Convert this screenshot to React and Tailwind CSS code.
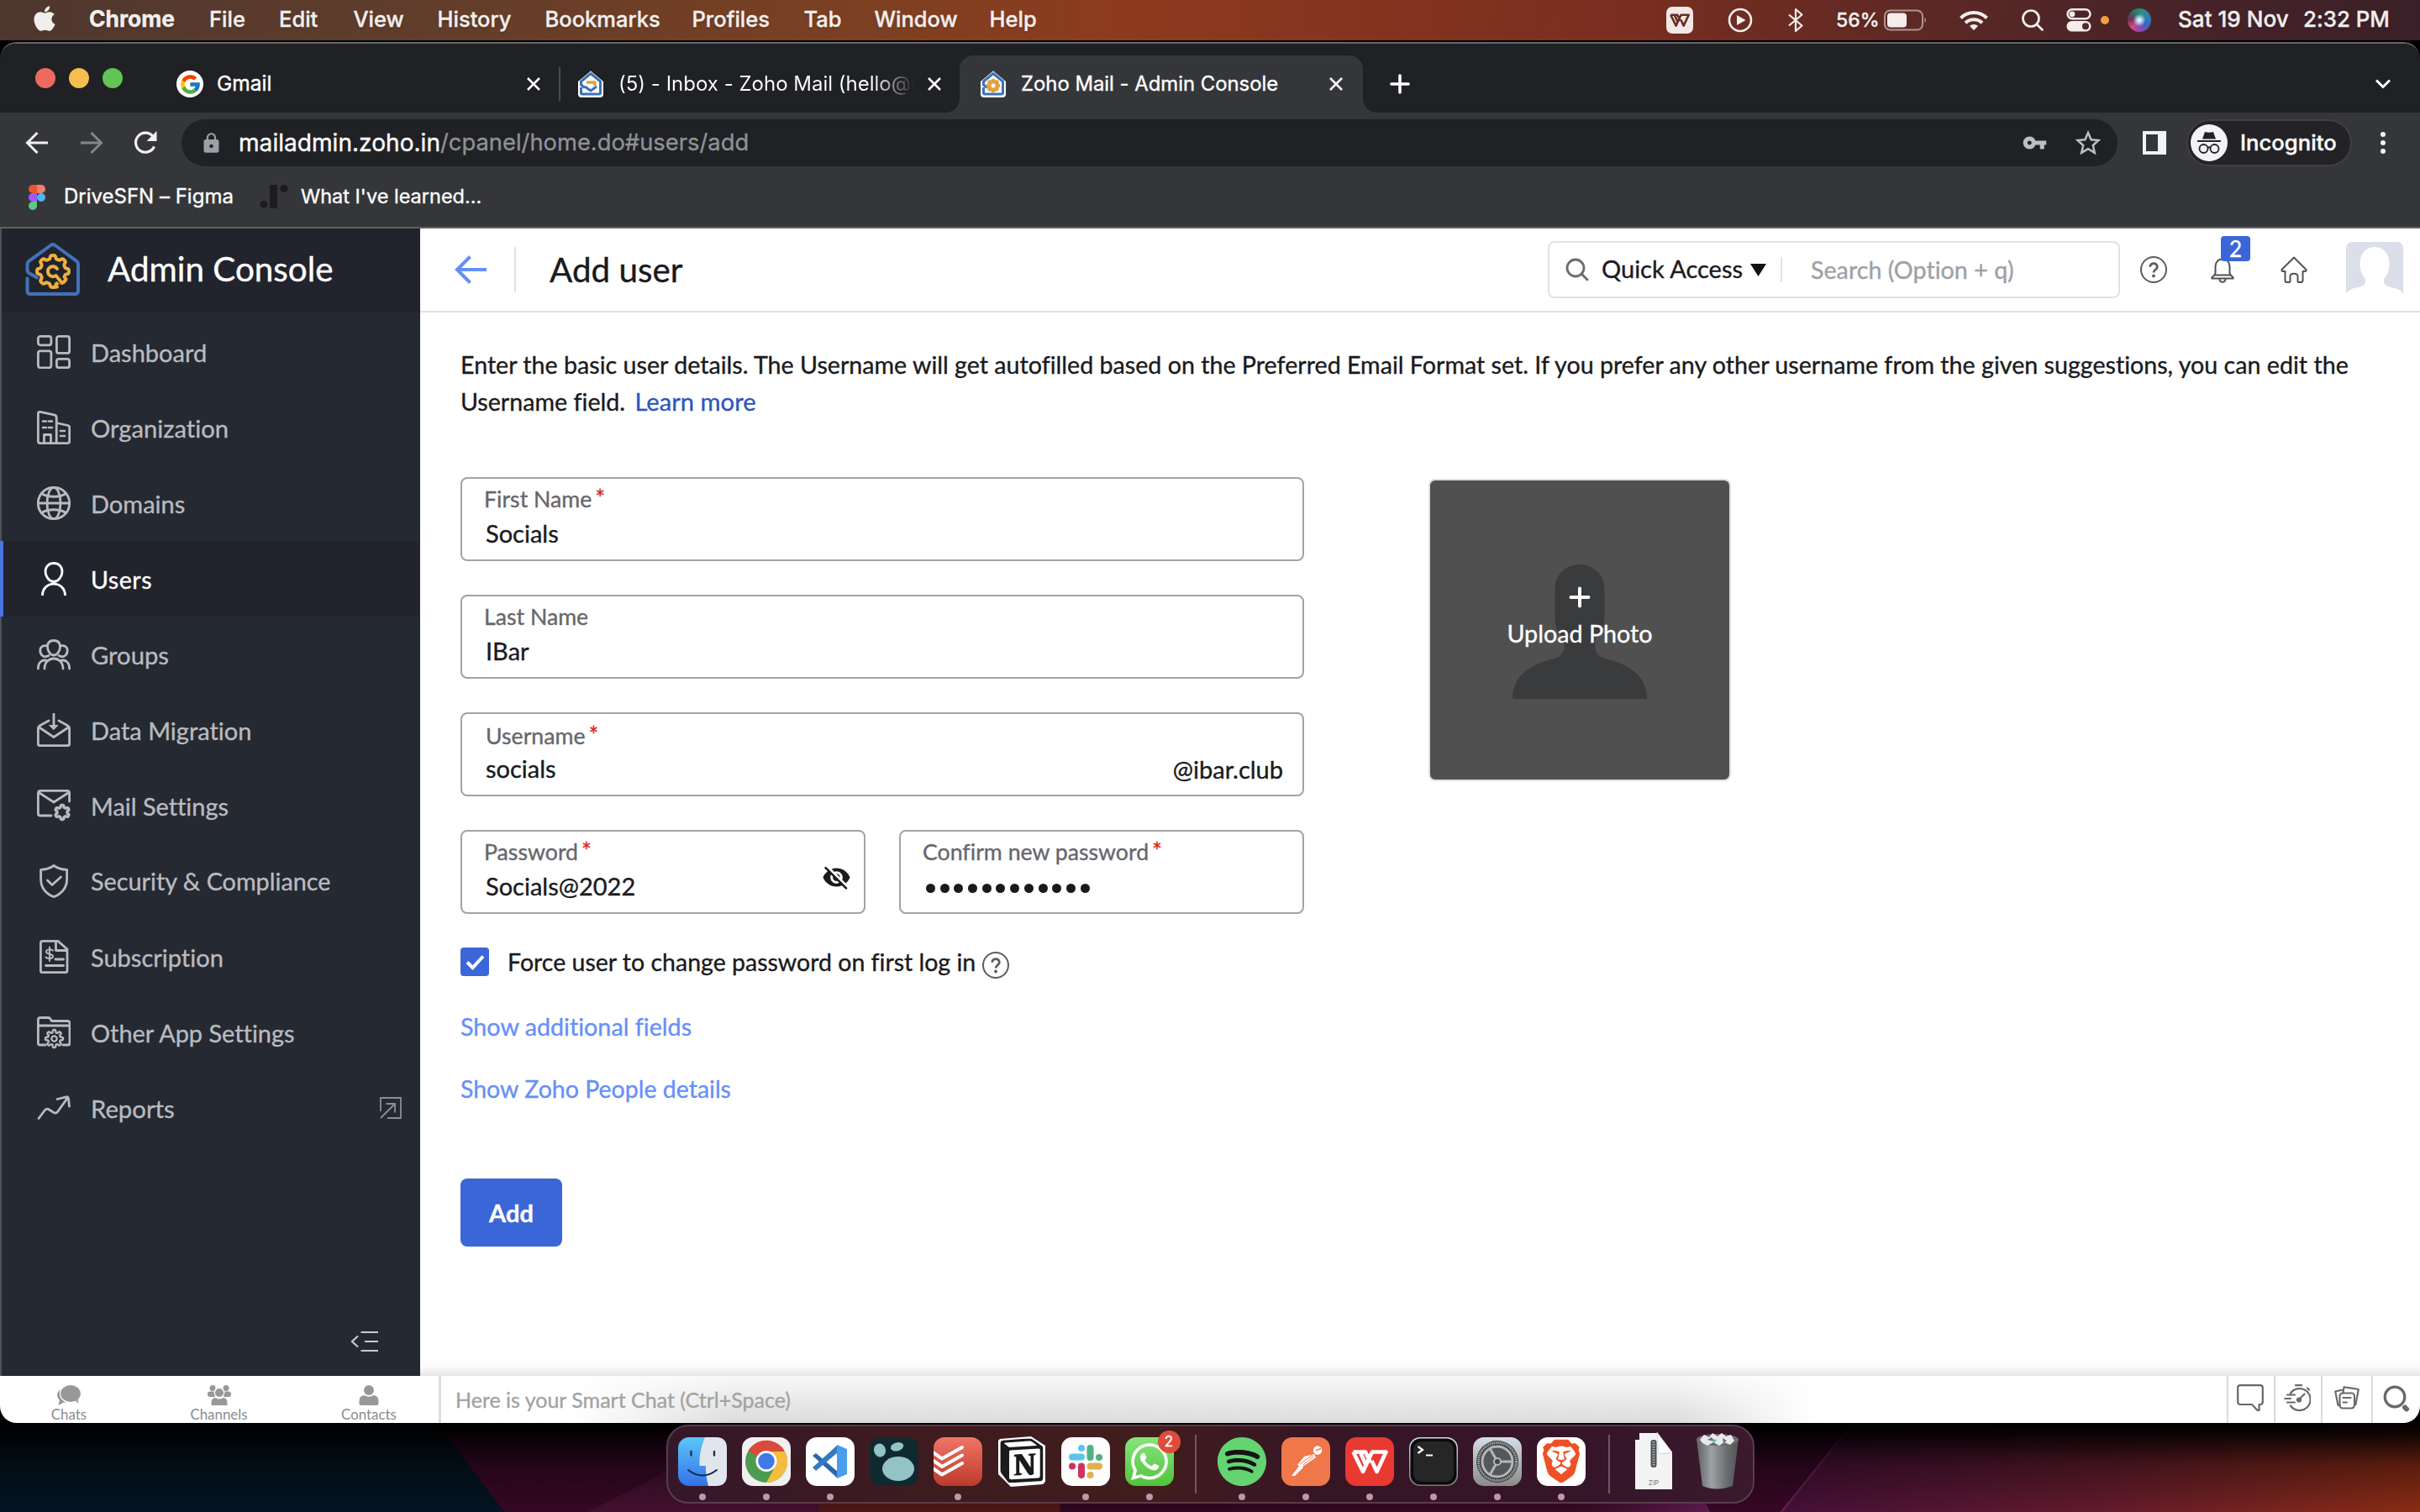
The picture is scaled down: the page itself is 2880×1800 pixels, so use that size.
import React from "react";
import { FaApple, FaWhatsapp, FaSpotify } from "react-icons/fa";
import { FcGoogle } from "react-icons/fc";
import { SiNotion, SiBrave } from "react-icons/si";
import { MdVisibilityOff, MdVpnKey, MdLock } from "react-icons/md";

const sf = "font-['Inter',sans-serif]";
const lato = "font-['Lato',sans-serif] [font-variant-ligatures:none] [-webkit-text-stroke:0.35px_currentColor]";

/* Closed wavy outline with n teeth around (cx, cy). */
function gear(cx, cy, r, a, n) {
  const pts = [];
  for (let i = 0; i < 240; i++) {
    const t = (i / 240) * Math.PI * 2;
    const rr = r + a * Math.tanh(2.2 * Math.cos(n * (t + Math.PI / 2)));
    pts.push((cx + rr * Math.cos(t)).toFixed(2) + " " + (cy + rr * Math.sin(t)).toFixed(2));
  }
  return "M" + pts.join("L") + "Z";
}

/* ---------- menu bar ---------- */
const menus = [
  ["File", "w-[83px]"],
  ["Edit", "w-[88.5px]"],
  ["View", "w-[100px]"],
  ["History", "w-[128px]"],
  ["Bookmarks", "w-[175px]"],
  ["Profiles", "w-[133px]"],
  ["Tab", "w-[84px]"],
  ["Window", "w-[137px]"],
  ["Help", "w-[70px]"],
];

function WpsMark({ className, bg, fg }) {
  return (
    <svg viewBox="0 0 58 58" className={className}>
      <rect width="58" height="58" rx="13" fill={bg} />
      <path d="M9.500 17.500H24L30 30M9.500 17.500L21 41L32 17.500H48.500L37.500 41L31.500 28M18 18L25 34" fill="none" stroke={fg} strokeWidth="4.600" strokeLinejoin="round" />
    </svg>
  );
}

function MenuBar() {
  return (
    <header className={`${sf} flex h-12 shrink-0 items-center bg-[linear-gradient(90deg,#4e372f_0%,#603d2b_17%,#7d4022_36%,#8d3b1e_46%,#84331f_57%,#7a2e20_67%,#652a23_76%,#4c2428_87%,#3a2029_100%)] text-[25.5px] font-medium text-[#f3eeec] whitespace-nowrap [text-shadow:0_2px_3px_rgba(0,0,0,0.2)]`}>
      <FaApple className="mb-[4px] ml-[37px] h-[34px] w-[32px] text-[#f1eeec]" />
      <span className="ml-[37px] w-[143px] pb-[2px] text-[26.4px] font-bold">Chrome</span>
      {menus.map(([t, w]) => (
        <span key={t} className={`${w} pb-[2px]`}>{t}</span>
      ))}
      <div className="ml-auto flex items-center">
        <WpsMark className="mr-[41px] size-8" bg="#f0e8e6" fg="#6a2a22" />
        <svg viewBox="0 0 30 30" className="mr-[41px] size-[30px]">
          <circle cx="15" cy="15" r="13" fill="none" stroke="#f3eeec" strokeWidth="2.6" />
          <path d="M11 9L21.5 15L11 21Z" fill="#f3eeec" />
        </svg>
        <svg viewBox="0 0 20 30" className="mr-[38px] h-[30px] w-5" fill="none" stroke="#f3eeec" strokeWidth="2.2" strokeLinejoin="round">
          <path d="M2 8.5L17.5 21.5L10 28V2L17.5 8.5L2 21.5" />
        </svg>
        <span className="w-[57px] text-[23px]">56%</span>
        <svg viewBox="0 0 52 26" className="mr-[38px] h-[26px] w-[52px]">
          <rect x="1" y="1.5" width="45" height="23" rx="6.5" fill="none" stroke="#f3eeec" strokeOpacity=".55" strokeWidth="2" />
          <rect x="4" y="4.5" width="23" height="17" rx="4" fill="#f3eeec" />
          <path d="M48.5 9.5Q51.5 13 48.5 16.5Z" fill="#f3eeec" fillOpacity=".6" />
        </svg>
        <svg viewBox="0 0 34 24" className="mr-[39px] h-6 w-[34px]" fill="none" stroke="#f3eeec" strokeWidth="4">
          <path d="M1.5 9.5A22 22 0 0 1 32.500 9.500" />
          <path d="M7 15.300A14.500 14.500 0 0 1 27 15.300" />
          <path d="M17 24L12 19A7 7 0 0 1 22 19Z" fill="#f3eeec" stroke="none" />
        </svg>
        <svg viewBox="0 0 28 28" className="mr-[26px] size-7" fill="none" stroke="#f3eeec" strokeWidth="2.7" strokeLinecap="round">
          <circle cx="12" cy="12" r="9.500" />
          <path d="M19 19L25.500 25.500" />
        </svg>
        <svg viewBox="0 0 30 28" className="mr-[11px] h-7 w-[30px]">
          <rect x="1.500" y="1.300" width="27" height="11" rx="5.500" fill="none" stroke="#f3eeec" strokeWidth="2.4" />
          <circle cx="7" cy="6.800" r="3.400" fill="#f3eeec" />
          <rect x="0.500" y="15" width="29" height="12.600" rx="6.300" fill="#f3eeec" />
          <circle cx="23" cy="21.300" r="4" fill="#5a2626" />
        </svg>
        <i className="mr-[22px] size-[10px] rounded-full bg-[#f0a03c]" />
        <i className="mr-[32px] size-7 rounded-full bg-[radial-gradient(circle_at_50%_50%,#ffffff_0%,#b9d4ee_14%,transparent_38%),conic-gradient(from_20deg,#2f8f7c,#2c7fae,#3b62c2,#8a4bb4,#d04a86,#6d3050,#267a67,#2f8f7c)]" />
        <span className="w-[149px] pb-[2px] text-[26.1px]">Sat 19 Nov</span>
        <span className="w-[139px] pb-[2px] text-[25.8px]">2:32 PM</span>
      </div>
    </header>
  );
}

/* ---------- browser chrome ---------- */
const Close = ({ className = "" }) => (
  <svg viewBox="0 0 16 16" className={`size-4 shrink-0 ${className}`} stroke="#fff" strokeWidth="2.500">
    <path d="M1 1L15 15M15 1L1 15" />
  </svg>
);

function ZohoFav({ inner, className = "" }) {
  return (
    <svg viewBox="0 0 32 32" className={`size-8 shrink-0 ${className}`} fill="none" strokeLinejoin="round">
      <path d="M1 13L16 0.500L31 13V28Q31 32 27 32H5Q1 32 1 28Z" fill="#fff" />
      <path d="M4.500 20V26.500Q4.500 28 6 28H26Q27.500 28 27.500 26.500V13L16 3.500L4.500 13V17L9 20.500" stroke="#3a72b8" strokeWidth="3" />
      {inner === "gear" ? (
        <path d={gear(16, 18, 5.400, 1.400, 8)} stroke="#e3a03c" strokeWidth="3.200" />
      ) : (
        <>
          <path d="M9 19L16 24L23 19" stroke="#3a72b8" strokeWidth="3" />
          <path d="M11 14H21V18" stroke="#e3a03c" strokeWidth="3.400" />
        </>
      )}
    </svg>
  );
}

function TabStrip() {
  return (
    <div className={`${sf} flex h-[82px] shrink-0 items-end bg-[#202124] text-[24px] text-white whitespace-nowrap`}>
      <div className="flex h-[82px] w-[210px] items-center gap-4 pl-[42px]">
        <i className="size-6 rounded-full bg-[#ee6a5f]" />
        <i className="size-6 rounded-full bg-[#f5be4f]" />
        <i className="size-6 rounded-full bg-[#61c454]" />
      </div>
      <div className="flex h-[68px] w-[455px] items-center">
        <span className="mr-[16px] flex size-8 items-center justify-center rounded-full bg-white"><FcGoogle className="size-[27px]" /></span>
        <span className="pb-px text-[24.500px]">Gmail</span>
        <Close className="mr-[22px] ml-auto" />
      </div>
      <div className="flex h-[68px] w-[477px] items-center">
        <i className="h-10 w-[2px] bg-[#4b4c50]" />
        <ZohoFav className="mr-[17px] ml-[20px]" />
        <span className="w-[352px] bg-[linear-gradient(90deg,#fff_86%,#202124_100%)] bg-clip-text pb-px text-[24px] text-transparent [-webkit-text-stroke:0]">(5) - Inbox - Zoho Mail (hello@i</span>
        <Close className="ml-[16px]" />
      </div>
      <div className="relative flex h-[68px] w-[480px] items-center rounded-t-2xl bg-[#35363a]">
        <i className="absolute bottom-0 -left-4 size-4 bg-[radial-gradient(circle_at_0_0,#202124_15.500px,#35363a_16px)]" />
        <i className="absolute -right-4 bottom-0 size-4 bg-[radial-gradient(circle_at_100%_0,#202124_15.500px,#35363a_16px)]" />
        <ZohoFav inner="gear" className="mr-[17px] ml-6" />
        <span className="pb-px text-[23.850px]">Zoho Mail - Admin Console</span>
        <Close className="mr-6 ml-auto" />
      </div>
      <svg viewBox="0 0 24 24" className="mb-[22px] ml-[32px] size-6" stroke="#fff" strokeWidth="3.600" strokeLinecap="round">
        <path d="M12 2V22M2 12H22" />
      </svg>
      <svg viewBox="0 0 20 12" className="mr-[34px] mb-[28px] ml-auto h-3 w-5" fill="none" stroke="#fff" strokeWidth="3">
        <path d="M2 1.500L10 9.500L18 1.500" />
      </svg>
    </div>
  );
}

function Toolbar() {
  return (
    <div className={`${sf} flex h-[72px] shrink-0 items-center bg-[#35363a] text-white whitespace-nowrap`}>
      <svg viewBox="0 0 28 28" className="ml-[30px] size-7" fill="none" stroke="#f1f1f1" strokeWidth="3"><path d="M27 14H3M14.500 2L2.500 14L14.500 26" /></svg>
      <svg viewBox="0 0 28 28" className="ml-[37px] size-7" fill="none" stroke="#86878a" strokeWidth="3"><path d="M1 14H25M13.500 2L25.500 14L13.500 26" /></svg>
      <svg viewBox="0 0 28 28" className="ml-[36px] size-7" fill="none" stroke="#f1f1f1" strokeWidth="3.200"><path d="M24.500 18.500A11.500 11.500 0 1 1 23 6.500" /><path d="M27.500 0V12H15.500Z" fill="#f1f1f1" stroke="none" /></svg>
      <div className="ml-[29px] flex h-14 w-[2304px] items-center rounded-full bg-[#202124] pr-[20px] pl-[22px]">
        <MdLock className="size-[27px] text-[#9aa0a6]" />
        <span className="ml-[19px] text-[28.100px]">mailadmin.zoho.in</span>
        <span className="text-[27.350px] text-[#8f9196]">/cpanel/home.do#users/add</span>
        <MdVpnKey className="mr-[33px] ml-auto h-[30px] w-[31px] text-[#bdbec1]" />
        <svg viewBox="0 0 30 30" className="size-[30px]" fill="none" stroke="#bdbec1" strokeWidth="2.500"><path d="M15 3L18.600 11.200L27.500 12L20.800 18L22.800 26.800L15 22.100L7.200 26.800L9.200 18L2.500 12L11.400 11.200Z" /></svg>
      </div>
      <i className="ml-[30px] h-7 w-7 border-4 border-r-[10px] border-[#f1f3f4]" />
      <div className="ml-[24px] flex h-14 w-[197px] items-center rounded-full border-2 border-[#3f3f44] bg-[#232227] pl-[3px]">
        <svg viewBox="0 0 44 44" className="size-11">
          <circle cx="22" cy="22" r="22" fill="#f1f3f4" />
          <path d="M17 9Q22 10.500 27 9L30 17.500H14Z" fill="#232227" />
          <path d="M8 20H36" stroke="#232227" strokeWidth="1.800" />
          <g fill="none" stroke="#232227" strokeWidth="1.800"><circle cx="15.500" cy="29" r="5" /><circle cx="28.500" cy="29" r="5" /><path d="M20.500 28Q22 26.500 23.500 28" /></g>
        </svg>
        <span className="ml-[15px] text-[25.700px] font-medium">Incognito</span>
      </div>
      <div className="ml-[34px] flex flex-col gap-[4px]">
        <i className="size-[6px] rounded-full bg-[#f1f3f4]" />
        <i className="size-[6px] rounded-full bg-[#f1f3f4]" />
        <i className="size-[6px] rounded-full bg-[#f1f3f4]" />
      </div>
    </div>
  );
}

function Bookmarks() {
  return (
    <div className={`${sf} flex h-[66px] shrink-0 items-start border-b-2 border-[#5f6064] bg-[#35363a] pt-[12px] text-[24px] leading-[32px] text-white whitespace-nowrap`}>
      <svg viewBox="0 0 20 30" className="mt-[2px] ml-[34px] h-[30px] w-5">
        <path d="M10 0H5a5 5 0 0 0 0 10h5z" fill="#e8572f" />
        <path d="M10 0h5a5 5 0 0 1 0 10h-5z" fill="#f0806c" />
        <path d="M10 10H5a5 5 0 0 0 0 10h5z" fill="#9b5cf6" />
        <circle cx="15" cy="15" r="5" fill="#4fb5f7" />
        <path d="M10 20H5a5 5 0 1 0 5 5z" fill="#5cc884" />
      </svg>
      <span className="ml-[22px] w-[233px] text-[24px]">DriveSFN – Figma</span>
      <svg viewBox="0 0 34 28" className="mt-[2px] h-7 w-[34px]" fill="#1c1b20"><circle cx="5" cy="23.500" r="4.500" /><rect x="12" width="9" height="28" /><circle cx="29" cy="4.500" r="4.500" /></svg>
      <span className="ml-[15px] text-[23.500px]">What I've learned...</span>
    </div>
  );
}

/* ---------- sidebar ---------- */
const navIcons = {
  dashboard: (<><rect x="1.400" y="1.400" width="15.500" height="10.400" rx="2.500" /><rect x="23.400" y="1.400" width="15.200" height="20" rx="2.500" /><rect x="1.400" y="18.800" width="15.500" height="20" rx="2.500" /><rect x="23.400" y="28.300" width="15.200" height="10.400" rx="2.500" /></>),
  org: (<><path d="M3.500 38.600Q1.400 38.600 1.400 36.500V3.500Q1.400 .900 4 1.400L20.500 4.800Q23.200 5.400 23.200 8V38.600M23.200 14.500L37 17.500Q38.700 18 38.700 20V36.500Q38.700 38.600 36.600 38.600H3.500M8.500 38V28.500H16.500V38" /><path d="M7 12.500H11M14 12.500H18M7 20H11M14 20H18M28 24H33M28 30H33" strokeWidth="2.600" /></>),
  globe: (<><circle cx="20" cy="20" r="18.700" /><ellipse cx="20" cy="20" rx="8" ry="18.700" /><path d="M1.400 20H38.600M5.500 8.500C13 13.500 27 13.500 34.500 8.500M5.500 31.500C13 26.500 27 26.500 34.500 31.500" /></>),
  user: (<path d="M20 1.500C13.500 1.500 10 6 10 11.500C10 17 14.500 23.500 20 23.500C25.500 23.500 30 17 30 11.500C30 6 26.500 1.500 20 1.500ZM6.500 40C6.500 21.500 33.500 21.500 33.500 40" />),
  group: (<path d="M20 3.500C15 3.500 12.500 6.500 12.500 11C12.500 16 16 21 20 21C24 21 27.500 16 27.500 11C27.500 6.500 25 3.500 20 3.500ZM12.500 10C7 8.500 3.800 11.500 3.800 15.500C3.800 20 7.500 25 14 21.500M27.500 10C33 8.500 36.200 11.500 36.200 15.500C36.200 20 32.500 25 26 21.500M9 37C9 21 31 21 31 37M1.400 37C1.400 28 8 25.500 12.500 28M38.600 37C38.600 28 32 25.500 27.500 28" />),
  migrate: (<><path d="M14 9L4 14.500Q1.400 16 1.400 18.500V36.500Q1.400 38.600 3.500 38.600H36.500Q38.600 38.600 38.600 36.500V18.500Q38.600 16 36 14.500L26 9M2 16.500L20 28.500L38 16.500M20 1V17" /><path d="M15 14.500H25L20 19.500Z" fill="currentColor" strokeWidth="1" /></>),
  mail: (<><path d="M38.600 15V5.500Q38.600 2.400 36 2.400H4Q1.400 2.400 1.400 5.500V29.500Q1.400 32 4 32H17M3 5L20 16L37 5" /><path d={gear(30, 28, 7.300, 1.300, 6)} strokeWidth="3.400" /></>),
  shield: (<><path d="M20 1.500C15 5 9.500 6.300 4.600 6.300V18C4.600 28 11 35.500 20 38.600C29 35.500 35.600 28 35.600 18V6.300C30.500 6.300 25 5 20 1.500Z" /><path d="M12.500 19L18 24.500L28.500 15" /></>),
  sub: (<><path d="M6.800 1.400H25L36 11V36.500Q36 38.600 33.800 38.600H6.200Q4.400 38.600 4.400 36.500V3.500Q4.400 1.400 6.800 1.400ZM22.500 2V12.500H36M22 23H31.500M10.500 30.500H31.500" /><path d="M19 12.500C17 10.500 11 11 11 14C11 17.500 19 16 19 19.500C19 22.500 13 23 10.500 20.500M15 8.500V25" strokeWidth="2" /></>),
  folder: (<><path d="M10 35H3.500Q1.400 35 1.400 33V5Q1.400 2.500 4 2.500H13.500Q15 2.500 16 4L17.500 6.500H36.500Q39 6.500 39 9V33Q39 35 37 35H31M1.500 12H38.500" /><path d={gear(20.500, 27.500, 9, 1.600, 8)} strokeWidth="2.400" /><circle cx="20.500" cy="27.500" r="3.200" strokeWidth="2.200" /></>),
  chart: (<path d="M2 32.500L9.500 22.500Q11.500 20 14.500 22L20 25.500Q23 27 25 24L36 8.500M24 9.500L35 6.800Q37 6.400 37.400 8.500L38.500 18" />),
};

const nav = [
  ["dashboard", "Dashboard", "text-[29px]"],
  ["org", "Organization", "text-[29.200px]"],
  ["globe", "Domains", "text-[29px]"],
  ["user", "Users", "text-[28.600px] tracking-[0.500px]"],
  ["group", "Groups", "text-[29.200px]"],
  ["migrate", "Data Migration", "text-[29px]"],
  ["mail", "Mail Settings", "text-[28.900px]"],
  ["shield", "Security & Compliance", "text-[28.800px]"],
  ["sub", "Subscription", "text-[29px]"],
  ["folder", "Other App Settings", "text-[28.900px]"],
  ["chart", "Reports", "text-[29.300px]"],
];

function Sidebar() {
  return (
    <aside className="flex w-[500px] shrink-0 flex-col border-l-2 border-[#4d5056] bg-[#252932] whitespace-nowrap">
      <div className="flex h-[100px] items-center bg-[#21242d] pb-[4px] pl-[28px]">
        <svg viewBox="0 0 66 64" className="mr-[32px] h-[65px] w-[66px]" fill="none" strokeWidth="4" strokeLinecap="round" strokeLinejoin="round">
          <path d="M2.500 43V57.500Q2.500 61.500 6.500 61.500H59Q63 61.500 63 57.500V26.500Q63 23.500 60.500 21.800L35.500 3.500Q33 1.800 30.500 3.500L5 21.800Q2.500 23.500 2.500 26.500V33Q2.500 35.500 4.800 36.800L14 42" stroke="#4272b8" />
          <path d={gear(33, 34.500, 17, 2, 8)} stroke="#efb03d" />
          <path d="M38 31.500A6 6 0 1 0 36.500 39.500L47 50" stroke="#21242d" strokeWidth="8" />
          <path d="M46 47.500L48.500 43.500M33 53.500L38 53" stroke="#efb03d" />
          <path d="M38 31.500A6 6 0 1 0 36.500 39.500L44 48.500" stroke="#efb03d" />
        </svg>
        <span className="text-[40.400px] text-white">Admin Console</span>
      </div>
      <nav className="flex flex-col pt-[2px]">
        {nav.map(([k, t, c]) => {
          const on = k === "user";
          return (
            <div key={t} className={`relative flex h-[90px] w-[496px] items-center pl-[42px] ${on ? "bg-[#21242d] text-white" : "text-[#b9bbbf]"}`}>
              {on && <i className="absolute top-0 -left-[2px] h-full w-[4px] bg-[#4a72e0]" />}
              <svg viewBox="0 0 40 40" className="size-10" fill="none" stroke="currentColor" strokeWidth="2.800" strokeLinecap="round" strokeLinejoin="round">{navIcons[k]}</svg>
              <span className={`mt-[2px] ml-[24px] ${c}`}>{t}</span>
              {k === "chart" && (
                <svg viewBox="0 0 26 26" className="mr-[20px] ml-auto size-[26px]" fill="none" stroke="#8b8e94" strokeWidth="1.800"><path d="M1 17V1H25V25H9M1 25L18 8M7.500 8H18V18.500" /></svg>
              )}
            </div>
          );
        })}
      </nav>
      <svg viewBox="0 0 34 26" className="mt-auto mr-[49px] mb-[28px] h-[26px] w-[34px] self-end" fill="none" stroke="#c9cbce" strokeWidth="2.200"><path d="M9 6.500L2 13L9 19.500M12.500 2H33M17 13H33M12.500 24H33" /></svg>
    </aside>
  );
}

/* ---------- page ---------- */
const Help = ({ className = "" }) => (
  <svg viewBox="0 0 32 32" className={`size-8 ${className}`} fill="none" stroke="#5b5c61" strokeWidth="2">
    <circle cx="16" cy="16" r="15" />
    <path d="M11.800 12.700C11.800 7.300 20.300 7.300 20.300 12.500C20.300 16 16 16 16 19.500" strokeWidth="2.800" />
    <circle cx="16" cy="23.500" r="1.900" fill="#5b5c61" stroke="none" />
  </svg>
);

function PageHeader() {
  return (
    <div className="flex h-[100px] shrink-0 items-center border-b-2 border-[#e2e2e2] whitespace-nowrap">
      <svg viewBox="0 0 38 34" className="ml-[41px] h-[34px] w-[38px]" fill="none" stroke="#648ff9" strokeWidth="4"><path d="M38 17H4M18.500 1.500L3 17L18.500 32.500" /></svg>
      <i className="ml-[33px] h-[54px] w-[2px] bg-[#e2e2e2]" />
      <h1 className="ml-[40px] text-[40.400px] text-[#1a1a1c]">Add user</h1>
      <div className="ml-auto flex h-[68px] w-[681px] items-center rounded-lg border-2 border-[#e2e2e2]">
        <svg viewBox="0 0 28 28" className="ml-[19px] size-7" fill="none" stroke="#6a6b6f" strokeWidth="2.800" strokeLinecap="round"><circle cx="12" cy="12" r="10" /><path d="M19.500 19.500L26 26" /></svg>
        <span className="ml-[15px] w-[177px] pb-[2px] text-[29px] text-[#1a1a1c]">Quick Access</span>
        <svg viewBox="0 0 19 15" className="h-[15px] w-[19px]"><path d="M0 0H19L9.500 15Z" fill="#111" /></svg>
        <i className="ml-[17px] h-[30px] w-[2px] bg-[#e2e2e2]" />
        <span className="mt-[2px] ml-[34px] text-[28.700px] text-[#a0a0a5]">Search (Option + q)</span>
      </div>
      <Help className="ml-[24px]" />
      <div className="relative ml-[52px]">
        <svg viewBox="0 0 28 32" className="h-8 w-7" fill="none" stroke="#505156" strokeWidth="2"><path d="M14 3.500C8.500 3.500 5.500 7.500 5.500 12V19.500Q5.500 22 1.500 25V26.500H26.500V25Q22.500 22 22.500 19.500V12C22.500 7.500 19.500 3.500 14 3.500ZM14 0V3.500M5 22.500H23M10.500 27C10.500 32 17.500 32 17.500 27" /></svg>
        <b className="absolute -top-[24px] left-[12px] flex h-[30px] w-[35px] items-center justify-center rounded-[4px] bg-[#3b66d8] text-[26px] font-normal text-white">2</b>
      </div>
      <svg viewBox="0 0 32 32" className="ml-[55px] size-8" fill="none" stroke="#505156" strokeWidth="2" strokeLinejoin="round"><path d="M16 1.500L1.500 16Q.800 18.500 5.500 18V29Q5.500 31 7.500 31H10.500Q11.500 31 11.500 30V24C11.500 19.500 20.500 19.500 20.500 24V30Q20.500 31 21.500 31H24.500Q26.500 31 26.500 29V18Q31.200 18.500 30.500 16Z" /></svg>
      <svg viewBox="0 0 68 62" className="mr-[20px] mb-[4px] ml-[46px] h-[62px] w-[68px]"><path d="M0 8Q0 0 8 0H60Q68 0 68 8V62H0Z" fill="#dbdfe9" /><path d="M34 6C23 6 16 15 16.500 27C17 35 19.500 40 23 44C23.500 49 22 51 18 53C10 55 3 56 0 62H68C65 56 58 55 50 53C46 51 44.500 49 45 44C49 40 51 35 51.500 27C52 15 45 6 34 6Z" fill="#fff" /></svg>
    </div>
  );
}

function Field({ label, value, star, w, labelCls = "", right }) {
  return (
    <div className={`${w} flex h-[100px] items-center justify-between rounded-lg border-2 border-[#a2a2a9] pr-[24px] pl-[27px] whitespace-nowrap`}>
      <div className="h-full pt-[8px]">
        <div className={`-ml-px flex h-8 items-start text-[26.700px] leading-8 text-[#66676d] ${labelCls}`}>
          {label}
          {star && <span className="-mt-px ml-[4px] text-[28px] text-[#d6281f]">*</span>}
        </div>
        <div className="mt-[5px] ml-px flex h-10 items-center text-[29px] text-[#1a1a1c]">{value}</div>
      </div>
      {right}
    </div>
  );
}

function Page() {
  return (
    <main className="flex grow flex-col bg-white">
      <PageHeader />
      <div className="pt-[40px] pl-[48px] text-[28.600px] text-[#1a1a1c] whitespace-nowrap">
        <p className="text-[28.645px] leading-[44px]">
          Enter the basic user details. The Username will get autofilled based on the Preferred Email Format set. If you prefer any other username from the given suggestions, you can edit the
          <br />
          Username field. <a className="ml-[4px] text-[29.200px] text-[#2d56bd]">Learn more</a>
        </p>
        <div className="mt-[68px] flex items-start">
          <form className="flex w-[1004px] flex-col">
            <Field w="w-full" label="First Name" value="Socials" star />
            <div className="h-10" />
            <Field w="w-full" label="Last Name" value="IBar" />
            <div className="h-10" />
            <Field w="w-full" label="Username" labelCls="pt-[2px] pl-[2px]" value="socials" star right={<span className="-mr-px mt-[35px] text-[29px]">@ibar.club</span>} />
            <div className="mt-10 flex gap-10">
              <Field w="w-[482px]" label="Password" value="Socials@2022" star right={<MdVisibilityOff className="-mr-[9px] mt-[12px] size-[35px]" />} />
              <Field w="w-[482px]" label="Confirm new password" star value={<span className="ml-[2px] flex gap-[5.700px] pt-[4px]">{Array.from({ length: 12 }, (_, i) => <i key={i} className="size-[11px] rounded-full bg-[#1a1a1c]" />)}</span>} />
            </div>
            <div className="mt-10 flex h-[34px] items-center">
              <svg viewBox="0 0 34 34" className="size-[34px]"><rect width="34" height="34" rx="4" fill="#3b66d8" /><path d="M8 17.500L14.500 24L27 10.500" fill="none" stroke="#fff" strokeWidth="4" /></svg>
              <span className="ml-[22px] text-[28.500px]">Force user to change password on first log in</span>
              <Help className="mt-[8px] ml-[8px]" />
            </div>
            <a className="mt-[43px] h-[34px] text-[28.700px] leading-[34px] text-[#6690f8]">Show additional fields</a>
            <a className="mt-[40px] h-[34px] text-[28.500px] leading-[34px] text-[#6690f8]">Show Zoho People details</a>
            <button type="button" className="mt-[90px] flex h-[81px] w-[121px] items-center justify-center rounded-lg bg-[#3b66d8] text-[29px] font-bold text-white">Add</button>
          </form>
          <div className="relative mt-[2px] ml-[148px] flex size-[360px] flex-col items-center overflow-hidden rounded-lg border-2 border-[#dfdfdf] bg-[#505050] pt-[126px] text-white">
            <svg viewBox="0 0 160 160" className="absolute top-[100px] left-[98px] size-[160px]"><path d="M80 0C64 0 50.500 12 50.500 28V64C50.500 72 53 79 57 83Q62 87 62 95C62 105 57 110 50 112C25 118 0 130 0 160H160C160 130 135 118 110 112C103 110 98 105 98 95Q98 87 103 83C107 79 109.500 72 109.500 64V28C109.500 12 96 0 80 0Z" fill="#3a3b3c" /></svg>
            <svg viewBox="0 0 26 26" className="relative size-[26px]" stroke="#fff" strokeWidth="4" strokeLinecap="round"><path d="M13 2.500V23.500M2.500 13H23.500" /></svg>
            <span className="relative mt-[12px] text-[28.700px] leading-[36px]">Upload Photo</span>
          </div>
        </div>
      </div>
      <div className="mt-auto h-[22px] bg-[linear-gradient(180deg,#fff,#fbfbfb_50%,#e6e6e6)]" />
    </main>
  );
}

function BottomBar() {
  return (
    <footer className="relative flex h-14 shrink-0 bg-white whitespace-nowrap">
      <i className="absolute inset-y-0 left-[680px] w-[1480px] bg-[linear-gradient(180deg,#f8f8f8,#dcdcdc)] [mask-image:linear-gradient(90deg,transparent,#000_13%,#000_89%,transparent)]" />
      <div className="flex w-[522px] pt-[11px] text-center text-[16.900px] leading-[20px] text-[#8c8c8c] [-webkit-text-stroke:0]">
        <div className="w-[164px]">
          <svg viewBox="0 0 28 24" className="mx-auto h-6 w-7" fill="#989898"><ellipse cx="10" cy="12" rx="10" ry="8.500" /><path d="M3 17L1.500 24L9 20Z" /><ellipse cx="16" cy="10" rx="12.500" ry="10.500" stroke="#fff" strokeWidth="1.200" /><path d="M20 17L25.500 22L24 14Z" /></svg>
          <p className="mt-[1px]">Chats</p>
        </div>
        <div className="w-[193px]">
          <svg viewBox="0 0 28 24" className="mx-auto h-6 w-7" fill="#989898"><circle cx="6" cy="3.500" r="3.500" /><circle cx="22" cy="3.500" r="3.500" /><rect x="0" y="7.500" width="10" height="6.500" rx="3" /><rect x="18" y="7.500" width="10" height="6.500" rx="3" /><circle cx="14" cy="9" r="5.700" stroke="#fff" strokeWidth="1.300" /><path d="M4.500 24V21Q4.500 15 9.500 15Q14 18 18.500 15Q23.500 15 23.500 21V24Z" /></svg>
          <p className="mt-[1px]">Channels</p>
        </div>
        <div className="w-[164px]">
          <svg viewBox="0 0 24 24" className="mx-auto size-6" fill="#989898"><circle cx="12" cy="6" r="6" /><path d="M.500 24V19Q.500 12.500 6.500 12Q12 15.500 17.500 12Q23.500 12.500 23.500 19V21.500Q23.500 24 21 24H3Q.500 24 .500 22Z" /></svg>
          <p className="mt-[1px]">Contacts</p>
        </div>
      </div>
      <i className="w-[3px] bg-[#dedede]" />
      <span className="relative mt-[11px] ml-[17px] text-[25px] leading-[34px] text-[#a3a3a3]">Here is your Smart Chat (Ctrl+Space)</span>
      <div className="ml-auto flex *:flex *:items-center *:justify-center *:border-l-2 *:border-[#dadada]">
        <div className="w-14 pr-[3px] pb-[4px]"><svg viewBox="0 0 32 32" className="size-8" fill="none" stroke="#686868" strokeWidth="2.200" strokeLinejoin="round"><path d="M4 1.200H28Q30.800 1.200 30.800 4V21Q30.800 24 28 24H26.500V31H24.500L18 24H4Q1.200 24 1.200 21V4Q1.200 1.200 4 1.200Z" /></svg></div>
        <div className="w-14 pr-[2px] pb-[4px]"><svg viewBox="0 0 32 32" className="size-8" fill="none" stroke="#686868" strokeWidth="2.200" strokeLinecap="round"><path d="M8 10.500A13 13 0 1 1 8 25.500M14 1.200H21M28 4.500L30 6.500M4 12.500H13M1.200 17H8M4 21.500H13M18 18L24.500 11.500" /><circle cx="18" cy="18.500" r="2" fill="#686868" /></svg></div>
        <div className="w-[60px] pb-[5px]"><svg viewBox="0 0 30 28" className="h-7 w-[30px]" fill="none" stroke="#686868" strokeWidth="2.100" strokeLinecap="round" strokeLinejoin="round"><rect x="6.500" y="8.500" width="17.500" height="18" rx="3.500" /><path d="M6.500 22.500L4.500 23L1.200 6.500L9 4.800M10.500 8L11.500 1.200L28.800 4L25.500 22L24.500 22M10.500 14H19.500M10.500 19.500H15" /></svg></div>
        <div className="w-[58px] pb-[2px]"><svg viewBox="0 0 32 32" className="size-8" fill="none" stroke="#686868" strokeWidth="3.200" strokeLinecap="round"><circle cx="14" cy="14" r="11.800" /><path d="M26 26.500L28 28.500" strokeWidth="6" /></svg></div>
      </div>
    </footer>
  );
}

/* ---------- dock ---------- */
const Tile = ({ bg, children, id }) => (
  <svg viewBox="0 0 58 58" className="size-[58px]">
    {id && <defs><linearGradient id={id} x1="0" y1="0" x2="0" y2="1"><stop offset="0" stopColor={bg[0]} /><stop offset="1" stopColor={bg[1]} /></linearGradient></defs>}
    <rect width="58" height="58" rx="13" fill={id ? `url(#${id})` : bg} />
    {children}
  </svg>
);

const dockApps = [
  ["finder", <Tile id="gFinder" bg={["#5cc6f9", "#3272ea"]}>
    <path d="M32 0C27 12 25 23 25.500 34H33C32.500 42 34 50 36 58H45Q58 58 58 45V13Q58 0 45 0Z" fill="#e1e6ee" />
    <path d="M15.500 17V21.500M43 17V21.500" stroke="#23344d" strokeWidth="2.400" strokeLinecap="round" />
    <path d="M12 39Q29 52 46 39" fill="none" stroke="#182741" strokeWidth="2" strokeLinecap="round" /></Tile>, true],
  ["chrome", <Tile bg="#f1f0f0">
    <circle cx="29" cy="29" r="25" fill="#4c9b51" />
    <path d="M29 29L7.500 16A25 25 0 0 1 50.700 16.500Z" fill="#da4a3c" />
    <path d="M29 17H51A25 25 0 0 1 29 54L39.500 35Z" fill="#f3bd42" />
    <circle cx="29" cy="28.500" r="12.500" fill="#fff" /><circle cx="29" cy="28.500" r="9.800" fill="#4078e6" /></Tile>, true],
  ["code", <Tile bg="#ffffff">
    <path d="M8 22L12 19L38 41V49Z" fill="#2a68ac" /><path d="M8 36L12 40L38 18V9Z" fill="#3379c4" />
    <path d="M37 9L49 14V44L37 49Z" fill="#4a9cec" /></Tile>, true],
  ["paw", <Tile bg="#10292f">
    <ellipse cx="12" cy="15.500" rx="7" ry="8" transform="rotate(-15 12 15.500)" fill="#93c3c6" /><ellipse cx="32.500" cy="11.500" rx="7.800" ry="5" transform="rotate(-15 32 11)" fill="#93c3c6" /><ellipse cx="34" cy="37.500" rx="19" ry="14.500" fill="#93c3c6" /></Tile>, false],
  ["todo", <Tile id="gTodo" bg={["#ef7566", "#bd3a2b"]}>
    <path d="M0 18.500L10 25.500L34 12M0 28L10 35L34 21.500M0 37.500L10 44.500L34 31" fill="none" stroke="#fff" strokeWidth="4" strokeLinecap="round" strokeLinejoin="round" /></Tile>, true],
  ["notion", <svg viewBox="0 0 58 60" className="h-[60px] w-[58px]"><path d="M3 3L40 0L57 11V54L54 57L16 60L1 45V5Z" fill="#fff" /><g transform="translate(2.500 2.500) scale(2.200)"><SiNotion size={24} color="#1b1b1b" /></g></svg>, false],
  ["slack", <Tile bg="#fdfdfd">
    <g strokeWidth="8" strokeLinecap="round"><path d="M13 23.500H24M24 13V13.100" stroke="#5fc3ea" /><path d="M34.500 13V24M45 24H45.100" stroke="#4fb283" /><path d="M45 34.500H34.500M34.500 45V45.100" stroke="#e2b04a" /><path d="M24 45V34.500M13 34.500H13.100" stroke="#d0335f" /></g></Tile>, true],
  ["wa", <div className="relative"><Tile id="gWa" bg={["#86e57c", "#53c23c"]}><g transform="translate(4 4)"><FaWhatsapp size={50} color="#fff" /></g></Tile>
    <b className={`${sf} absolute -top-[8px] -right-[8px] flex size-[27px] items-center justify-center rounded-full bg-[#e14b3c] text-[17px] font-normal text-white`}>2</b></div>, true],
];

const dockApps2 = [
  ["spotify", <span className="flex size-[58px] items-center justify-center rounded-full bg-[#141414] text-[#63d470]"><FaSpotify className="size-[60px] shrink-0" /></span>],
  ["postman", <Tile bg="#ef7749"><circle cx="43" cy="15.500" r="5.200" fill="#fff" /><path d="M39 20L27 23L19 33L24 36L41 24Z" fill="#fff" /><path d="M22 33L12 46L16 46L26 36Z" fill="#fff" /><path d="M22 32L37 21M26 33L38 23" stroke="#ef7749" strokeWidth="1" /><path d="M41 16L47 13.500" stroke="#ef7749" strokeWidth="1.400" /></Tile>],
  ["wps", <WpsMark className="size-[58px]" bg="#e93a32" fg="#fff" />],
  ["term", <Tile id="gTerm" bg={["#cfdde4", "#77787a"]}><rect x="1.500" y="1.500" width="55" height="55" rx="12" fill="#0b0b0b" /><rect x="5" y="5" width="48" height="48" rx="9" fill="#262626" /><path d="M10.500 11L16 15L10.500 19M20 21.500H28" fill="none" stroke="#fff" strokeWidth="2.200" /></Tile>],
  ["settings", <Tile id="gSet" bg={["#d3dee5", "#8d8b88"]}><circle cx="29" cy="29" r="25" fill="#3e4042" /><circle cx="29" cy="29" r="22.500" fill="none" stroke="#a9abad" strokeWidth="3" strokeDasharray="1.400 1" /><circle cx="29" cy="29" r="18" fill="#55575a" stroke="#b4b6b8" strokeWidth="3" /><path d="M29 29L46 29M29 29L20.500 14M29 29L20.500 44" stroke="#b4b6b8" strokeWidth="3" /><circle cx="29" cy="29" r="4" fill="#44464a" stroke="#b4b6b8" strokeWidth="2" /></Tile>],
  ["brave", <Tile bg="#ffffff"><g transform="translate(3 2.500)"><SiBrave size={52} color="#ee5128" /></g></Tile>],
];

const Dot = ({ on = true }) => <i className={`mt-[9px] size-2 rounded-full ${on ? "bg-[#bd98a8]" : "bg-transparent"}`} />;

function Dock() {
  return (
    <div className="relative mx-auto mt-[2px] flex h-[94px] w-[1295px] rounded-[26px] border-2 border-[#593c48] bg-[linear-gradient(90deg,#35172a,#3d1b1f_22%,#411d1d_45%,#361525_60%,#36152a_85%,#3a1a2c)] pl-[3px]">
      {dockApps.map(([k, el, on]) => (
        <div key={k} className="flex w-[76px] flex-col items-center pt-[13px]">
          <div className="flex h-[58px] items-center">{el}</div>
          <Dot on={on} />
        </div>
      ))}
      <i className="mx-[16px] mt-[10px] h-[70px] w-[2px] bg-[#745563]" />
      {dockApps2.map(([k, el]) => (
        <div key={k} className="flex w-[76px] flex-col items-center pt-[13px]">
          <div className="flex h-[58px] items-center">{el}</div>
          <Dot />
        </div>
      ))}
      <i className="mt-[10px] mr-[14px] ml-[18px] h-[70px] w-[2px] bg-[#745563]" />
      <svg viewBox="0 0 76 68" className="mt-[7px] h-[68px] w-[76px]">
        <path d="M16 9H21V1H42L60 24V68H16Z" fill="#f3f3f3" /><path d="M42 1L44 25Q52 28 60 24Z" fill="#d7d7d7" /><path d="M42 0L60 24Q50 26 44 25Z" fill="#fff" stroke="#ccc" strokeWidth=".600" />
        <rect x="34.500" y="9" width="7" height="33" rx="3" fill="#4d5256" /><path d="M38 11V40" stroke="#a5abb0" strokeWidth="3" strokeDasharray="1.500 1.500" />
        <text x="38" y="62.500" textAnchor="middle" fontFamily="Inter" fontSize="8" fill="#777">ZIP</text>
      </svg>
      <svg viewBox="0 0 76 68" className="mt-[8px] h-[68px] w-[76px]">
        <defs><linearGradient id="gBin"><stop offset="0" stopColor="#5c5e61" /><stop offset=".35" stopColor="#9fa2a4" /><stop offset=".7" stopColor="#6d7073" /><stop offset="1" stopColor="#505356" /></linearGradient></defs>
        <path d="M13 7L20 63Q38 70 56 63L63 7Z" fill="url(#gBin)" />
        <ellipse cx="38" cy="8" rx="25" ry="7" fill="#6a6d70" />
        <path d="M17 8L22 2L28 5L32 0L38 4L43 0L48 4L54 2L58 9L53 14L46 11L40 15L33 11L26 15L20 12Z" fill="#e9e9ea" />
        <path d="M26 8L31 5L34 10ZM44 6L49 9L45 12Z" fill="#6b7277" /><path d="M32 7L37 8L34 12Z" fill="#4ec3b5" />
      </svg>
    </div>
  );
}

function Wallpaper() {
  return (
    <svg viewBox="0 0 2880 112" preserveAspectRatio="none" className="absolute bottom-0 left-0 h-[112px] w-full">
      <defs>
        <linearGradient id="wShade" x1="0" y1="0" x2="0" y2="1"><stop offset="0" stopColor="#000" /><stop offset=".15" stopColor="#000" stopOpacity=".92" /><stop offset=".5" stopColor="#000" stopOpacity=".35" /><stop offset="1" stopColor="#000" stopOpacity="0" /></linearGradient>
        <linearGradient id="wRight"><stop offset="0" stopColor="#451038" /><stop offset=".5" stopColor="#621b2c" /><stop offset="1" stopColor="#8a2c14" /></linearGradient>
        <linearGradient id="wMid"><stop offset="0" stopColor="#2e0620" /><stop offset=".8" stopColor="#350a22" /><stop offset="1" stopColor="#5b1c4c" /></linearGradient>
      </defs>
      <rect width="2880" height="112" fill="#041422" />
      <path d="M515 0L600 112H2880V0Z" fill="#360825" />
      <path d="M700 112L800 60H960L975 112Z" fill="#42102f" />
      <path d="M970 90H1260L1262 112H975Z" fill="#4b1618" />
      <path d="M1262 112V90H2025L2035 112Z" fill="url(#wMid)" />
      <path d="M2210 0L2120 112H2880V0Z" fill="url(#wRight)" />
      <path d="M2210 0L2120 112" stroke="#6a2158" strokeWidth="2" />
      <rect width="2880" height="112" fill="url(#wShade)" />
    </svg>
  );
}

export default function App() {
  return (
    <div className={`${lato} relative flex h-[1800px] w-[2880px] flex-col overflow-hidden bg-black antialiased`}>
      <Wallpaper />
      <MenuBar />
      <div className="relative mt-[2px] flex h-[1644px] shrink-0 flex-col overflow-hidden rounded-[20px] border-t-2 border-[#66676a]">
        <TabStrip />
        <Toolbar />
        <Bookmarks />
        <div className="flex grow">
          <Sidebar />
          <Page />
        </div>
        <BottomBar />
      </div>
      <Dock />
    </div>
  );
}
